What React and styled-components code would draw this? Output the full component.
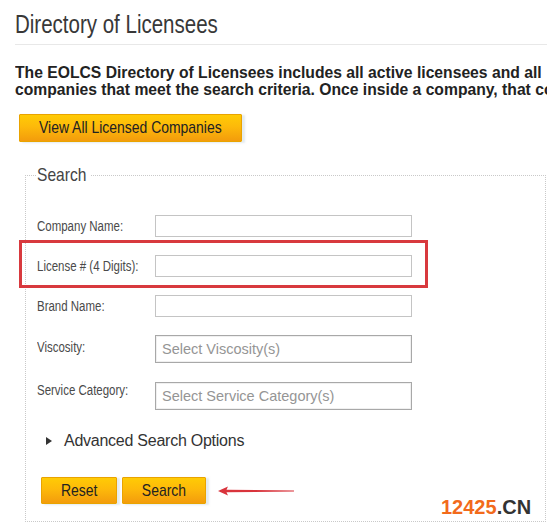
import React from "react";
import styled, { createGlobalStyle } from "styled-components";

const GlobalStyle = createGlobalStyle`
  html, body {
    margin: 0;
    padding: 0;
    background: #fff;
    overflow: hidden;
  }
  body {
    font-family: "Liberation Sans", Arial, sans-serif;
  }
`;

// no condensed face is installed, so squeeze Liberation Sans to Arial Narrow widths
const Narrow = styled.span`
  display: inline-block;
  white-space: nowrap;
  transform: scaleX(0.82);
  transform-origin: ${({ $origin }) => $origin || "left"} center;
`;

const Page = styled.div`
  position: relative;
  width: 547px;
  height: 530px;
  padding-left: 15px;
  box-sizing: border-box;
`;

const Title = styled.h1`
  margin: 0;
  padding-top: 9px;
  font-weight: normal;
  font-size: 25px;
  line-height: 30px;
  color: #383838;
`;

const Rule = styled.div`
  margin-top: 5px;
  border-top: 1px solid #e8e8e8;
`;

const Intro = styled.p`
  margin: 19px 0 0;
  overflow: hidden;
  font-size: 15.7px;
  font-weight: bold;
  line-height: 17px;
  color: #222;
  span {
    display: block;
    white-space: nowrap;
  }
`;

const GoldButton = styled.button`
  display: flex;
  align-items: center;
  justify-content: center;
  width: ${({ $w }) => $w}px;
  height: ${({ $h }) => $h || 27}px;
  margin: 0;
  padding: 0;
  border: 1px solid #e9a300;
  border-radius: 1px;
  background: linear-gradient(#ffcb05 0%, #fdb90a 45%, #f39c0c 100%);
  box-shadow: 3px 1px 2px rgba(200, 215, 225, 0.5);
  font-family: "Liberation Sans", Arial, sans-serif;
  font-size: 17px;
  color: #222;
  cursor: pointer;
  overflow: visible;
`;

const ViewAll = styled(GoldButton)`
  margin: 16px 0 0 4px;
`;

const Fieldset = styled.fieldset`
  box-sizing: border-box;
  width: 521px;
  margin: 22px 0 0 10px;
  padding: 0 0 17px 11px;
  border: 1px dotted #c9c9c9;
  min-width: 0;
`;

const Legend = styled.legend`
  width: 52px;
  padding: 0 2px 0 0;
  font-size: 19px;
  line-height: 22px;
  color: #444;
`;

const FieldRow = styled.div`
  display: grid;
  grid-template-columns: 118px 257px;
  align-items: center;
  height: ${({ $h }) => $h}px;
  margin-top: ${({ $mt }) => $mt}px;
`;

const Highlight = styled(FieldRow)`
  box-sizing: border-box;
  width: 409px;
  margin-left: -18px;
  padding: 4px 13px 0 15px;
  border: 3px solid #d8393e;
`;

const Label = styled.label`
  font-size: 14px;
  line-height: 16px;
  color: #4a4a4a;
  margin-bottom: ${({ $raise }) => $raise || 0}px;
`;

const TextInput = styled.input`
  box-sizing: border-box;
  width: 257px;
  height: 22px;
  margin: 0;
  padding: 0 4px;
  border: 1px solid #c4c4c4;
  background: #fff;
  outline: none;
`;

const Select = styled.div`
  box-sizing: border-box;
  width: 257px;
  height: 28px;
  display: flex;
  align-items: center;
  padding-left: 6px;
  border: 1px solid #a8a8a8;
  box-shadow: inset 0 0 0 1px #f0f0f0;
  font-size: 14.5px;
  color: #959595;
`;

const Advanced = styled.div`
  display: flex;
  align-items: center;
  gap: 12px;
  margin-top: 21px;
  padding-left: 9px;
  height: 20px;
  font-size: 16px;
  letter-spacing: -0.25px;
  color: #333;
  cursor: pointer;
`;

const Caret = styled.span`
  width: 0;
  height: 0;
  border-top: 4.5px solid transparent;
  border-bottom: 4.5px solid transparent;
  border-left: 6px solid #333;
`;

const Actions = styled.div`
  display: flex;
  align-items: center;
  gap: 5px;
  margin-top: 26px;
  padding-left: 4px;
`;

const Arrow = styled.svg`
  margin-left: 7px;
`;

const Watermark = styled.div`
  position: absolute;
  left: 441px;
  top: 497px;
  font-size: 20px;
  line-height: 20px;
  font-weight: bold;
  color: #333;
  span {
    color: #f26a1b;
  }
`;

export default function App() {
  return (
    <Page>
      <GlobalStyle />
      <Title>
        <Narrow>Directory of Licensees</Narrow>
      </Title>
      <Rule />
      <Intro>
        <span>The EOLCS Directory of Licensees includes all active licensees and all</span>
        <span>companies that meet the search criteria. Once inside a company, that company</span>
      </Intro>
      <ViewAll $w={223} $h={28}>
        <Narrow $origin="center">View All Licensed Companies</Narrow>
      </ViewAll>

      <Fieldset>
        <Legend>
          <Narrow>Search</Narrow>
        </Legend>
        <FieldRow $h={22} $mt={29}>
          <Label><Narrow>Company Name:</Narrow></Label>
          <TextInput />
        </FieldRow>
        <Highlight $h={48} $mt={3}>
          <Label><Narrow>License # (4 Digits):</Narrow></Label>
          <TextInput />
        </Highlight>
        <FieldRow $h={22} $mt={7}>
          <Label><Narrow>Brand Name:</Narrow></Label>
          <TextInput />
        </FieldRow>
        <FieldRow $h={28} $mt={18}>
          <Label $raise={4}><Narrow>Viscosity:</Narrow></Label>
          <Select>Select Viscosity(s)</Select>
        </FieldRow>
        <FieldRow $h={28} $mt={19}>
          <Label $raise={12}><Narrow>Service Category:</Narrow></Label>
          <Select>Select Service Category(s)</Select>
        </FieldRow>
        <Advanced>
          <Caret />
          Advanced Search Options
        </Advanced>
        <Actions>
          <GoldButton $w={76}><Narrow $origin="center">Reset</Narrow></GoldButton>
          <GoldButton $w={84}><Narrow $origin="center">Search</Narrow></GoldButton>
          <Arrow width="76" height="10" viewBox="0 0 76 10">
            <polygon points="0,5 10,0.5 8.5,3.8 76,4.5 76,5.5 8.5,6.2 10,9.5" fill="#d9343c" />
          </Arrow>
        </Actions>
      </Fieldset>

      <Watermark>
        <span>12425</span>.CN
      </Watermark>
    </Page>
  );
}
